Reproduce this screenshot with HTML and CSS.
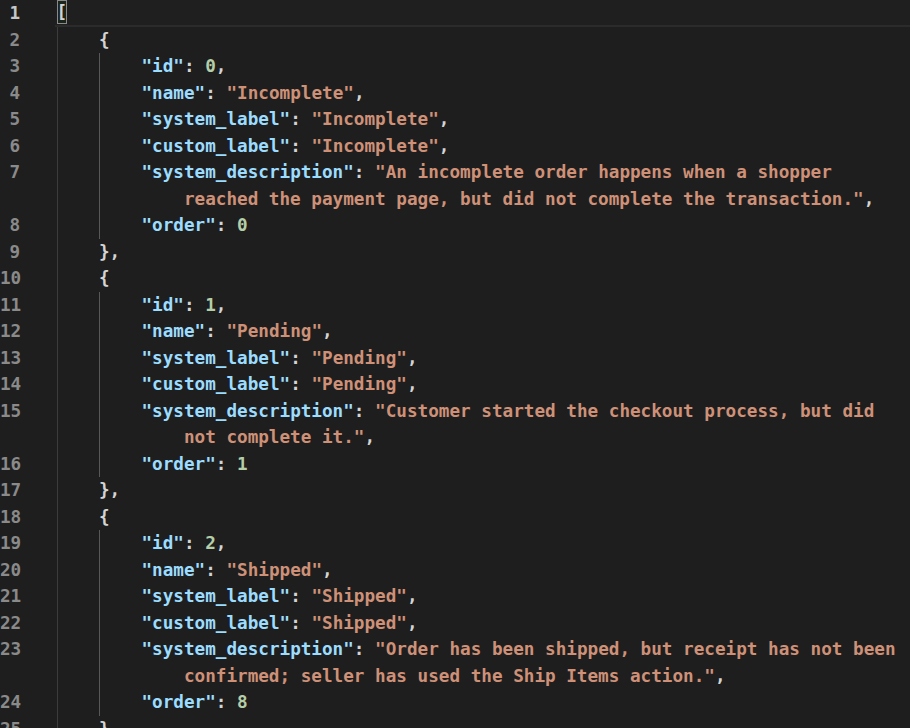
FILE: index.html
```html
<!DOCTYPE html>
<html>
<head>
<meta charset="utf-8">
<link rel="stylesheet" href="styles.css">
</head>
<body>
<div class="editor">
  <div class="row cur"><span class="ln">1</span><div class="code"><span class="bm">[</span></div></div>
  <div class="row"><span class="ln">2</span><div class="code"><span class="g g0"></span><span class="p">{</span></div></div>
  <div class="row"><span class="ln">3</span><div class="code"><span class="g g0"></span><span class="g g1"></span><span class="k">"id"</span><span class="p">: </span><span class="n">0</span><span class="p">,</span></div></div>
  <div class="row"><span class="ln">4</span><div class="code"><span class="g g0"></span><span class="g g1"></span><span class="k">"name"</span><span class="p">: </span><span class="s">"Incomplete"</span><span class="p">,</span></div></div>
  <div class="row"><span class="ln">5</span><div class="code"><span class="g g0"></span><span class="g g1"></span><span class="k">"system_label"</span><span class="p">: </span><span class="s">"Incomplete"</span><span class="p">,</span></div></div>
  <div class="row"><span class="ln">6</span><div class="code"><span class="g g0"></span><span class="g g1"></span><span class="k">"custom_label"</span><span class="p">: </span><span class="s">"Incomplete"</span><span class="p">,</span></div></div>
  <div class="row"><span class="ln">7</span><div class="code"><span class="g g0"></span><span class="g g1"></span><span class="k">"system_description"</span><span class="p">: </span><span class="s">"An incomplete order happens when a shopper</span></div></div>
  <div class="row"><span class="ln"></span><div class="code"><span class="g g0"></span><span class="g g1"></span><span class="w"></span><span class="s">reached the payment page, but did not complete the transaction."</span><span class="p">,</span></div></div>
  <div class="row"><span class="ln">8</span><div class="code"><span class="g g0"></span><span class="g g1"></span><span class="k">"order"</span><span class="p">: </span><span class="n">0</span></div></div>
  <div class="row"><span class="ln">9</span><div class="code"><span class="g g0"></span><span class="p">},</span></div></div>
  <div class="row"><span class="ln">10</span><div class="code"><span class="g g0"></span><span class="p">{</span></div></div>
  <div class="row"><span class="ln">11</span><div class="code"><span class="g g0"></span><span class="g g1"></span><span class="k">"id"</span><span class="p">: </span><span class="n">1</span><span class="p">,</span></div></div>
  <div class="row"><span class="ln">12</span><div class="code"><span class="g g0"></span><span class="g g1"></span><span class="k">"name"</span><span class="p">: </span><span class="s">"Pending"</span><span class="p">,</span></div></div>
  <div class="row"><span class="ln">13</span><div class="code"><span class="g g0"></span><span class="g g1"></span><span class="k">"system_label"</span><span class="p">: </span><span class="s">"Pending"</span><span class="p">,</span></div></div>
  <div class="row"><span class="ln">14</span><div class="code"><span class="g g0"></span><span class="g g1"></span><span class="k">"custom_label"</span><span class="p">: </span><span class="s">"Pending"</span><span class="p">,</span></div></div>
  <div class="row"><span class="ln">15</span><div class="code"><span class="g g0"></span><span class="g g1"></span><span class="k">"system_description"</span><span class="p">: </span><span class="s">"Customer started the checkout process, but did</span></div></div>
  <div class="row"><span class="ln"></span><div class="code"><span class="g g0"></span><span class="g g1"></span><span class="w"></span><span class="s">not complete it."</span><span class="p">,</span></div></div>
  <div class="row"><span class="ln">16</span><div class="code"><span class="g g0"></span><span class="g g1"></span><span class="k">"order"</span><span class="p">: </span><span class="n">1</span></div></div>
  <div class="row"><span class="ln">17</span><div class="code"><span class="g g0"></span><span class="p">},</span></div></div>
  <div class="row"><span class="ln">18</span><div class="code"><span class="g g0"></span><span class="p">{</span></div></div>
  <div class="row"><span class="ln">19</span><div class="code"><span class="g g0"></span><span class="g g1"></span><span class="k">"id"</span><span class="p">: </span><span class="n">2</span><span class="p">,</span></div></div>
  <div class="row"><span class="ln">20</span><div class="code"><span class="g g0"></span><span class="g g1"></span><span class="k">"name"</span><span class="p">: </span><span class="s">"Shipped"</span><span class="p">,</span></div></div>
  <div class="row"><span class="ln">21</span><div class="code"><span class="g g0"></span><span class="g g1"></span><span class="k">"system_label"</span><span class="p">: </span><span class="s">"Shipped"</span><span class="p">,</span></div></div>
  <div class="row"><span class="ln">22</span><div class="code"><span class="g g0"></span><span class="g g1"></span><span class="k">"custom_label"</span><span class="p">: </span><span class="s">"Shipped"</span><span class="p">,</span></div></div>
  <div class="row"><span class="ln">23</span><div class="code"><span class="g g0"></span><span class="g g1"></span><span class="k">"system_description"</span><span class="p">: </span><span class="s">"Order has been shipped, but receipt has not been</span></div></div>
  <div class="row"><span class="ln"></span><div class="code"><span class="g g0"></span><span class="g g1"></span><span class="w"></span><span class="s">confirmed; seller has used the Ship Items action."</span><span class="p">,</span></div></div>
  <div class="row"><span class="ln">24</span><div class="code"><span class="g g0"></span><span class="g g1"></span><span class="k">"order"</span><span class="p">: </span><span class="n">8</span></div></div>
  <div class="row"><span class="ln">25</span><div class="code"><span class="g g0"></span><span class="p">}</span></div></div>
</div>
</body>
</html>
```

FILE: styles.css
```css
html, body {
  margin: 0;
  padding: 0;
  background: #1e1e1e;
  overflow: hidden;
}

.editor {
  font-family: "DejaVu Sans Mono", "Liberation Mono", monospace;
  font-size: 17.65px;
  font-weight: bold;
  color: #d4d4d4;
}

.row {
  display: flex;
  height: 26.5px;
  line-height: 26.5px;
  white-space: pre;
}

.ln {
  flex: none;
  width: 20px;
  text-align: right;
  color: #8a8a8a;
}

.code {
  flex: 1;
  margin-left: 36.5px;
  display: flex;
  align-items: stretch;
}

.row.cur .ln {
  color: #c6c6c6;
}

.row.cur .code {
  box-sizing: border-box;
  border-bottom: 2px solid #2b2b2b;
  margin-left: 34.5px;
  padding-left: 2px;
  background: #1f1f1f;
}

.bm {
  display: inline-block;
  height: 24px;
  line-height: 24px;
  outline: 1px solid #8a8a8a;
  outline-offset: -1px;
  background: rgba(0, 100, 0, 0.1);
}

.g {
  display: inline-block;
  width: 4ch;
  flex: none;
  box-sizing: border-box;
  border-left: 1px solid #3c3c3c;
}

.g1 {
  border-left-color: #585858;
}

.w {
  display: inline-block;
  width: 4ch;
  flex: none;
}

.k { color: #9cdcfe; }
.s { color: #ce9178; }
.n { color: #b5cea8; }
.p { color: #d4d4d4; }
```
